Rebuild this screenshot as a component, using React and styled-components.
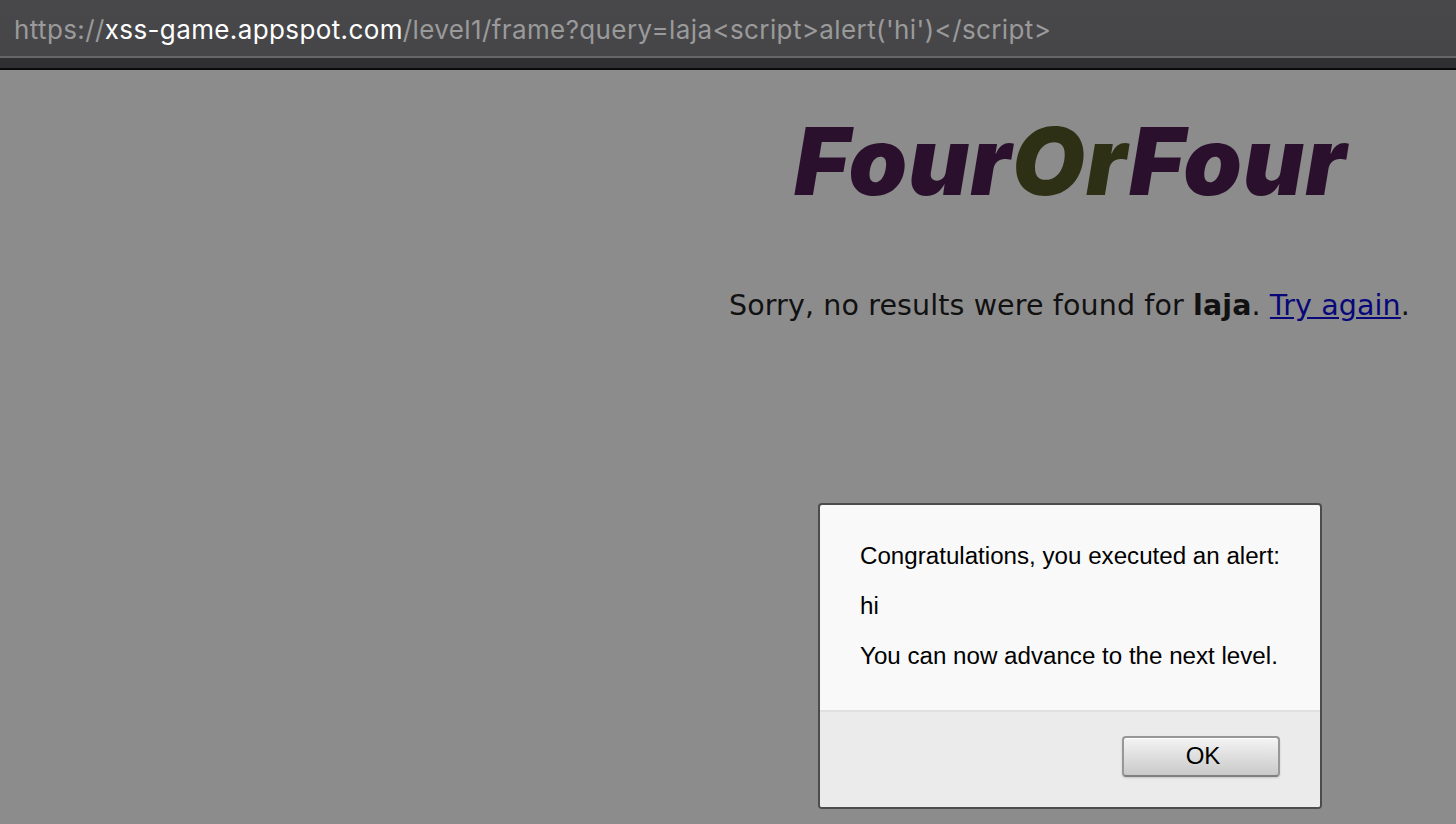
import React from 'react';
import styled, { createGlobalStyle } from 'styled-components';

const Global = createGlobalStyle`
    html, body {
        margin: 0;
        padding: 0;
        height: 100%;
        overflow: hidden;
    }
    #root {
        height: 100%;
    }
`;

const Page = styled.div`
    position: relative;
    width: 1456px;
    height: 824px;
    background: #8c8c8c;
    display: flex;
    flex-direction: column;
    overflow: hidden;
`;

const UrlBar = styled.div`
    box-sizing: border-box;
    height: 58px;
    padding: 12px 0 0 14px;
    background: linear-gradient(#48484a, #464648);
    border-bottom: 2px solid #666668;
    font-family: Inter, "Liberation Sans", sans-serif;
    font-size: 26px;
    line-height: 36px;
    letter-spacing: 0.385px;
    color: #9a9a9b;
    white-space: nowrap;
`;

const Host = styled.span`
    color: #fff;
`;

const BarEdge = styled.div`
    height: 10px;
    background: #303032;
    border-bottom: 2px solid #0a0a0a;
`;

const Content = styled.div`
    flex: 1;
    display: flex;
    flex-direction: column;
    align-items: flex-end;
    padding-right: 46px;
`;

const Logo = styled.div`
    margin-top: 36px;
    margin-right: 63px;
    font-family: Inter, sans-serif;
    font-weight: 900;
    font-style: italic;
    font-size: 94px;
    line-height: 110px;
    letter-spacing: 1px;
    color: #2a102c;
`;

const LogoAccent = styled.span`
    color: #2d3014;
`;

const Message = styled.p`
    margin: 0;
    margin-top: 72px;
    font-family: "DejaVu Sans", sans-serif;
    font-size: 28.5px;
    line-height: 36px;
    letter-spacing: 0.12px;
    color: #111;
    white-space: nowrap;
`;

const Retry = styled.a`
    color: #07077a;
    text-decoration: underline;
`;

const Dialog = styled.div`
    position: absolute;
    left: 818px;
    top: 503px;
    width: 504px;
    height: 306px;
    box-sizing: border-box;
    border: 2px solid #4c4c4c;
    border-radius: 4px;
    background: #f9f9f9;
    display: flex;
    flex-direction: column;
    font-family: "Liberation Sans", Arial, sans-serif;
    font-size: 24.15px;
    color: #000;
    overflow: hidden;
`;

const DialogBody = styled.div`
    height: 207px;
    box-sizing: border-box;
    padding: 26px 0 0 40px;
    border-bottom: 2px solid #e0e0e0;
`;

const DialogLine = styled.div`
    height: 50px;
    line-height: 50px;
    white-space: nowrap;
`;

const DialogFooter = styled.div`
    flex: 1;
    background: #ebebeb;
    display: flex;
    justify-content: flex-end;
    padding: 24px 40px 0 0;
`;

const OkButton = styled.button`
    width: 158px;
    height: 41px;
    padding: 0 0 2px 4px;
    box-sizing: border-box;
    border: 2px solid #979797;
    border-bottom-color: #7f7f7f;
    border-radius: 4px;
    background: linear-gradient(#f4f4f4, #c9c9c9);
    box-shadow: inset 0 1px 0 #fff, 0 1px 2px rgba(0, 0, 0, 0.15);
    font-family: "Liberation Sans", Arial, sans-serif;
    font-size: 24px;
    color: #000;
`;

const App = () => {
    return (
        <Page>
            <Global />
            <UrlBar>
                https://<Host>xss-game.appspot.com</Host>/level1/frame?query=laja&lt;script&gt;alert('hi')&lt;/script&gt;
            </UrlBar>
            <BarEdge />
            <Content>
                <Logo>Four<LogoAccent>Or</LogoAccent>Four</Logo>
                <Message>
                    Sorry, no results were found for <b>laja</b>. <Retry href="#">Try again</Retry>.
                </Message>
            </Content>
            <Dialog>
                <DialogBody>
                    <DialogLine>Congratulations, you executed an alert:</DialogLine>
                    <DialogLine>hi</DialogLine>
                    <DialogLine>You can now advance to the next level.</DialogLine>
                </DialogBody>
                <DialogFooter>
                    <OkButton>OK</OkButton>
                </DialogFooter>
            </Dialog>
        </Page>
    );
};

export default App;
